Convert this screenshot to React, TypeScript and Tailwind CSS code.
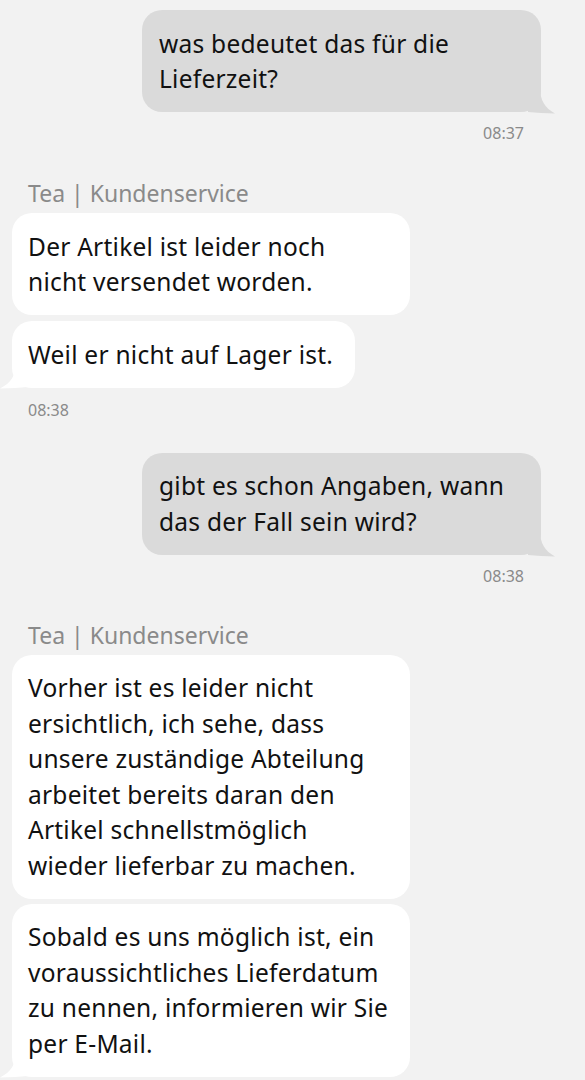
import React from 'react';

const font = { fontFamily: '"Noto Sans", "Open Sans", sans-serif' };

function OutTail() {
  return (
    <svg className="absolute right-[-15px] bottom-[-2px]" width="28" height="26" viewBox="0 0 28 26">
      <path d="M12 0 C12 12, 17 20, 27 25.5 C18 25.5, 8 24.5, 0 24 L0 0 Z" fill="#dadada" />
    </svg>
  );
}

function InTail() {
  return (
    <svg className="absolute left-[-12px] bottom-[-1px]" width="28" height="26" viewBox="0 0 28 26">
      <path d="M16 0 C16 12, 11 20, 0 25.5 C10 25.5, 20 24.5, 28 24 L28 0 Z" fill="#ffffff" />
    </svg>
  );
}

function Lines({ lines }: { lines: string[] }) {
  return (
    <>
      {lines.map((l, i) => (
        <span key={i} className="block whitespace-nowrap">
          {l}
        </span>
      ))}
    </>
  );
}

function Outgoing({ lines, time }: { lines: string[]; time: string }) {
  return (
    <div className="flex flex-col items-end pr-[44px]">
      <div className="relative w-[399px] rounded-[20px] bg-[#dadada] pl-[17px] py-[15.5px] text-[24.5px] leading-[35.5px] tracking-[0.25px] text-[#111]">
        <Lines lines={lines} />
        <OutTail />
      </div>
      <div className="mt-[10px] pr-[17px] text-[16px] leading-[22px] text-[#8a8a8a]">{time}</div>
    </div>
  );
}

function Incoming({ lines, width, tail }: { lines: string[]; width: string; tail?: boolean }) {
  return (
    <div className={`relative ${width} rounded-[20px] bg-white pl-[16px] py-[15.5px] text-[24.5px] leading-[35.5px] tracking-[0.25px] text-[#111]`}>
      <Lines lines={lines} />
      {tail && <InTail />}
    </div>
  );
}

export default function App() {
  return (
    <div className="min-h-[1080px] w-[585px] overflow-hidden bg-[#f2f2f2] pt-[10px]" style={font}>
      <Outgoing lines={['was bedeutet das für die', 'Lieferzeit?']} time="08:37" />

      <div className="mt-[35px] pl-[12px]">
        <div className="pl-[16px] text-[23px] leading-[28px] text-[#8a8a8a]">Tea | Kundenservice</div>
        <div className="mt-[6px] flex flex-col items-start gap-[6px]">
          <Incoming width="w-[398px]" lines={['Der Artikel ist leider noch', 'nicht versendet worden.']} />
          <Incoming width="w-[343px]" tail lines={['Weil er nicht auf Lager ist.']} />
        </div>
        <div className="mt-[11px] pl-[16px] text-[16px] leading-[22px] text-[#8a8a8a]">08:38</div>
      </div>

      <div className="mt-[32px]">
        <Outgoing lines={['gibt es schon Angaben, wann', 'das der Fall sein wird?']} time="08:38" />
      </div>

      <div className="mt-[34px] pl-[12px]">
        <div className="pl-[16px] text-[23px] leading-[28px] text-[#8a8a8a]">Tea | Kundenservice</div>
        <div className="mt-[6px] flex flex-col items-start gap-[5px]">
          <Incoming
            width="w-[398px]"
            lines={[
              'Vorher ist es leider nicht',
              'ersichtlich, ich sehe, dass',
              'unsere zuständige Abteilung',
              'arbeitet bereits daran den',
              'Artikel schnellstmöglich',
              'wieder lieferbar zu machen.',
            ]}
          />
          <Incoming
            width="w-[398px]"
            tail
            lines={[
              'Sobald es uns möglich ist, ein',
              'voraussichtliches Lieferdatum',
              'zu nennen, informieren wir Sie',
              'per E-Mail.',
            ]}
          />
        </div>
      </div>
    </div>
  );
}
